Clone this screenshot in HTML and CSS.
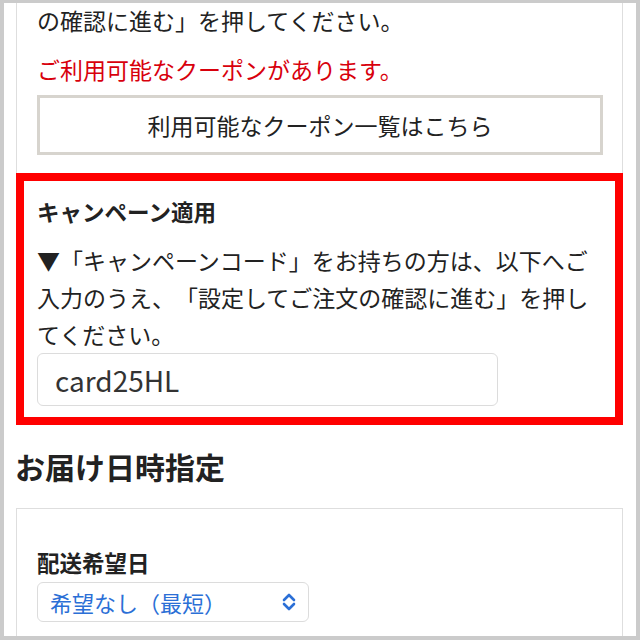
FILE: index.html
```html
<!DOCTYPE html>
<html lang="ja">
<head>
	<meta charset="utf-8">
	<title>ご注文手続き</title>
	<link rel="stylesheet" href="styles.css">
</head>
<body>
	<div class="frame">
		<section class="card card-coupon">
			<div class="card-body">
				<p class="note">の確認に進む」を押してください。</p>
				<p class="alert">ご利用可能なクーポンがあります。</p>
				<a class="btn-outline" href="#">利用可能なクーポン一覧はこちら</a>
			</div>
			<div class="campaign">
				<h3 class="field-title">キャンペーン適用</h3>
				<p class="note">▼「キャンペーンコード」をお持ちの方は、以下へご入力のうえ、「設定してご注文の確認に進む」を押してください。</p>
				<input class="code-input" type="text" value="card25HL">
			</div>
		</section>

		<h2 class="section-title">お届け日時指定</h2>

		<section class="card card-delivery">
			<label class="field-title">配送希望日</label>
			<div class="select-box">
				<span>希望なし（最短）</span>
				<svg class="select-arrows" width="16" height="22" viewBox="0 0 16 22">
					<path d="M3 9 L8 4 L13 9" />
					<path d="M3 13 L8 18 L13 13" />
				</svg>
			</div>
		</section>
	</div>
</body>
</html>
```

FILE: styles.css
```css
:root {
	font-family: "Noto Sans CJK JP", "Noto Sans", sans-serif;
	color: #222;
	text-spacing-trim: space-all;
}
body {
	margin: 0;
	background-color: #cbcbcb;
}
.frame {
	margin: 3px 4px 4px 4px;
	height: 633px;
	overflow: hidden;
	background-color: #fff;
	padding: 0 13px 0 12px;
}
p, h2, h3 {
	margin: 0;
}
.card {
	border: solid 1px #dedede;
}
.card-coupon {
	border-top: none;
}
.card-body {
	padding: 0 19px 0 20px;
}
.note {
	font-size: 23px;
	line-height: 37px;
}
.card-body .note {
	margin-top: -1px;
}
.alert {
	margin-top: 12px;
	font-size: 23px;
	line-height: 37px;
	color: #d8000c;
}
.btn-outline {
	display: flex;
	align-items: center;
	justify-content: center;
	margin-top: 7px;
	height: 54px;
	border: solid 3px #d7d4ce;
	color: #222;
	font-size: 23px;
	text-decoration: none;
}

.campaign {
	margin: 18px -1px -1px -1px;
	border: solid 8px #f00;
	padding: 12px 18px 11px 13px;
}
.field-title {
	display: block;
	font-size: 22.5px;
	line-height: 37px;
	font-weight: bold;
}
.campaign .note {
	margin-top: 12px;
}
.code-input {
	display: block;
	box-sizing: border-box;
	width: 461px;
	height: 53px;
	margin: 0;
	padding: 0 17px;
	border: solid 1px #dcdcdc;
	border-radius: 6px;
	font-family: "Noto Sans CJK JP", sans-serif;
	font-size: 28px;
	color: #333;
}

.section-title {
	margin: 21px 0 22px -1px;
	font-size: 30px;
	line-height: 40px;
	font-weight: bold;
}

.card-delivery {
	padding: 35px 20px 40px 20px;
}
.select-box {
	display: flex;
	align-items: center;
	justify-content: space-between;
	box-sizing: border-box;
	width: 272px;
	height: 40px;
	margin-top: 1px;
	padding: 0 11px 0 12px;
	border: solid 1px #dcdcdc;
	border-radius: 6px;
	font-size: 22px;
	color: #2b6fd6;
}
.select-arrows path {
	fill: none;
	stroke: #2b6fd6;
	stroke-width: 2.6;
	stroke-linecap: round;
	stroke-linejoin: round;
}
```
